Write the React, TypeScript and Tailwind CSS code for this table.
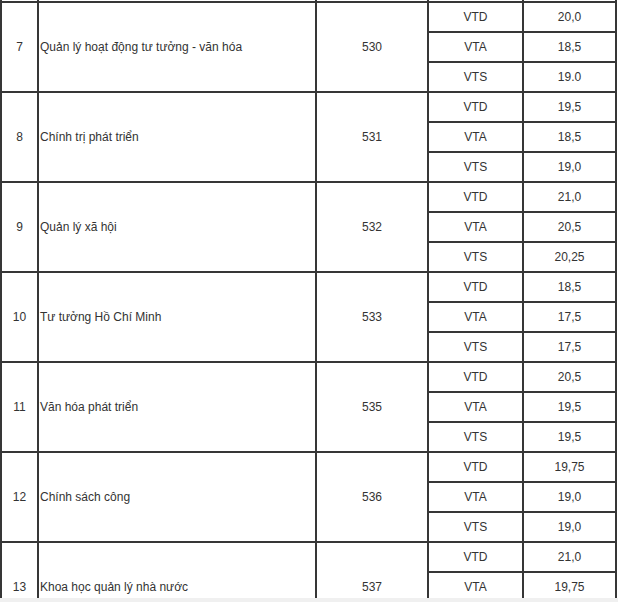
import { FC } from 'react';

interface Major {
    no: number;
    name: string;
    code: string;
    scores: [string, string][];
}

const majors: Major[] = [
    { no: 7, name: 'Quản lý hoạt động tư tưởng - văn hóa', code: '530', scores: [['VTD', '20,0'], ['VTA', '18,5'], ['VTS', '19.0']] },
    { no: 8, name: 'Chính trị phát triển', code: '531', scores: [['VTD', '19,5'], ['VTA', '18,5'], ['VTS', '19,0']] },
    { no: 9, name: 'Quản lý xã hội', code: '532', scores: [['VTD', '21,0'], ['VTA', '20,5'], ['VTS', '20,25']] },
    { no: 10, name: 'Tư tưởng Hồ Chí Minh', code: '533', scores: [['VTD', '18,5'], ['VTA', '17,5'], ['VTS', '17,5']] },
    { no: 11, name: 'Văn hóa phát triển', code: '535', scores: [['VTD', '20,5'], ['VTA', '19,5'], ['VTS', '19,5']] },
    { no: 12, name: 'Chính sách công', code: '536', scores: [['VTD', '19,75'], ['VTA', '19,0'], ['VTS', '19,0']] },
    // last row is cut by the bottom of the view
    { no: 13, name: 'Khoa học quản lý nhà nước', code: '537', scores: [['VTD', '21,0'], ['VTA', '19,75'], ['', '']] },
];

const MajorRows: FC<{ m: Major }> = ({ m }) => (
    <>
        <div className="row-span-3 flex items-center justify-center bg-white">{m.no}</div>
        <div className="row-span-3 flex items-center bg-white pl-px">{m.name}</div>
        <div className="row-span-3 flex items-center justify-center bg-white">{m.code}</div>
        {m.scores.map(([k, v], idx) => (
            <div key={idx} className="contents">
                <div className="col-start-4 flex items-center justify-center bg-white">{k}</div>
                <div className="flex items-center justify-center bg-white">{v}</div>
            </div>
        ))}
    </>
);

export default function App() {
    return (
        <div className="w-[618px] bg-white font-['Liberation_Sans',Arial,sans-serif] text-[12px] text-[#333]">
            <div className="h-[598px] overflow-hidden">
                <div className="grid w-[617px] grid-cols-[35px_276px_110px_93px_91px] grid-rows-[1px] auto-rows-[28px] gap-[2px] bg-[#363636] px-[2px] leading-none">
                    {/* bottom edge of the row above */}
                    <div className="bg-white" />
                    <div className="bg-white" />
                    <div className="bg-white" />
                    <div className="bg-white" />
                    <div className="bg-white" />
                    {majors.map((m) => (
                        <MajorRows key={m.no} m={m} />
                    ))}
                </div>
            </div>
            <div className="h-[4px] bg-[#f0f0f0]" />
        </div>
    );
}
